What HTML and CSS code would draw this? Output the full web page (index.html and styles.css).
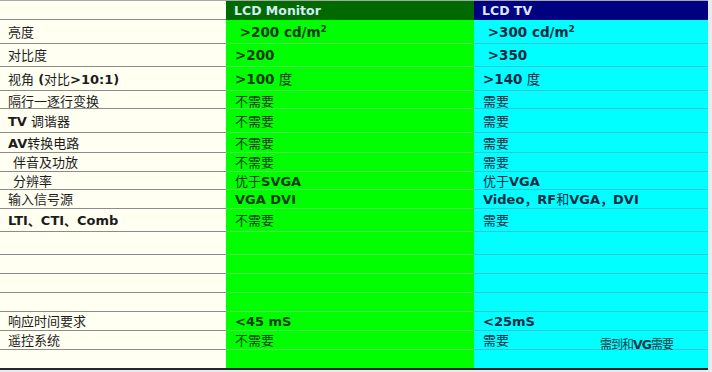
FILE: index.html
```html
<!DOCTYPE html>
<html lang="zh">
<head>
<meta charset="utf-8">
<link rel="stylesheet" href="styles.css">
</head>
<body>
<div class="page">
  <div class="grid">
    <div class="c l"></div>
    <div class="c g hd"><span>LCD Monitor</span></div>
    <div class="c t hd"><span>LCD TV</span></div>

    <div class="c l"><span>亮度</span></div>
    <div class="c g big"><span><b>&nbsp;&gt;200 cd/m<sup>2</sup></b></span></div>
    <div class="c t big"><span><b>&nbsp;&gt;300 cd/m<sup>2</sup></b></span></div>

    <div class="c l"><span>对比度</span></div>
    <div class="c g big"><span><b>&gt;200</b></span></div>
    <div class="c t big"><span><b>&nbsp;&gt;350</b></span></div>

    <div class="c l"><span>视角 <b>(</b>对比<b>&gt;10:1)</b></span></div>
    <div class="c g big"><span><b>&gt;100</b> 度</span></div>
    <div class="c t big"><span><b>&gt;140</b> 度</span></div>

    <div class="c l low"><span>隔行一逐行变换</span></div>
    <div class="c g low"><span>不需要</span></div>
    <div class="c t low"><span>需要</span></div>

    <div class="c l"><span><b>TV</b> 调谐器</span></div>
    <div class="c g"><span>不需要</span></div>
    <div class="c t"><span>需要</span></div>

    <div class="c l"><span><b>AV</b>转换电路</span></div>
    <div class="c g"><span>不需要</span></div>
    <div class="c t"><span>需要</span></div>

    <div class="c l ind"><span>伴音及功放</span></div>
    <div class="c g"><span>不需要</span></div>
    <div class="c t"><span>需要</span></div>

    <div class="c l ind"><span>分辨率</span></div>
    <div class="c g"><span>优于<b>SVGA</b></span></div>
    <div class="c t"><span>优于<b>VGA</b></span></div>

    <div class="c l"><span>输入信号源</span></div>
    <div class="c g"><span><b>VGA DVI</b></span></div>
    <div class="c t"><span><b>Video，RF</b>和<b>VGA，DVI</b></span></div>

    <div class="c l"><span><b>LTI、CTI、Comb</b></span></div>
    <div class="c g"><span>不需要</span></div>
    <div class="c t"><span>需要</span></div>

    <div class="c l"></div><div class="c g"></div><div class="c t"></div>
    <div class="c l"></div><div class="c g"></div><div class="c t"></div>
    <div class="c l"></div><div class="c g"></div><div class="c t"></div>
    <div class="c l"></div><div class="c g"></div><div class="c t"></div>

    <div class="c l"><span>响应时间要求</span></div>
    <div class="c g"><span><b>&lt;45 mS</b></span></div>
    <div class="c t"><span><b>&lt;25mS</b></span></div>

    <div class="c l"><span>遥控系统</span></div>
    <div class="c g"><span>不需要</span></div>
    <div class="c t"><span>需要</span></div>

    <div class="c l last"></div><div class="c g last"></div><div class="c t last"></div>
  </div>
  <div class="ghost">需到和<b>VG</b>需要</div>
</div>
</body>
</html>
```

FILE: styles.css
```css
html, body {
  margin: 0;
  padding: 0;
}
body {
  background: #ffffff;
  width: 712px;
  height: 372px;
  overflow: hidden;
}
.page {
  position: relative;
  width: 712px;
  height: 372px;
  background: #e9e9f0;
}
.grid {
  display: grid;
  grid-template-columns: 226px 248px 234px;
  grid-template-rows: 19px 24px 23px 24px 18px 24px 20px 19px 18px 19px 23px 23px 19px 19px 19px 19px 19px 18px;
  border-top: 1px solid #a8a8a8;
  border-bottom: 2px solid #262626;
  width: 708px;
  background: #fffff2;
}
.c {
  box-sizing: border-box;
  border-bottom: 1px solid #8c8c8c;
  display: flex;
  align-items: center;
  padding-top: 2px;
  white-space: nowrap;
  font-family: "DejaVu Sans", "Noto Sans CJK SC", sans-serif;
  font-size: 13px;
  line-height: 14px;
}
.c b {
  font-weight: bold;
}
.l {
  background: #fffff2;
  color: #1c1c1c;
  padding-left: 8px;
}
.l.ind {
  padding-left: 13px;
}
.g {
  background: #00ff00;
  color: #0c3a0c;
  border-bottom-color: #4fe04f;
  padding-left: 9px;
}
.t {
  background: #00ffff;
  color: #0a2a44;
  border-bottom-color: #38c4d2;
  padding-left: 9px;
}
.big {
  font-size: 13.5px;
  padding-top: 0;
}
.low {
  padding-top: 4px;
}
.hd {
  font-weight: bold;
  font-size: 12.5px;
  padding-top: 1px;
  color: #d4ecf4;
  padding-left: 8px;
}
.g.hd {
  background: #006a00;
  border-bottom-color: #006a00;
}
.t.hd {
  background: #000080;
  border-bottom-color: #000080;
  color: #dde6ff;
}
.last {
  border-bottom: none;
}
sup {
  font-size: 9px;
  line-height: 0;
  vertical-align: 5px;
}
.ghost {
  position: absolute;
  left: 600px;
  top: 335px;
  font-family: "Noto Sans CJK SC", "DejaVu Sans", sans-serif;
  font-size: 12px;
  letter-spacing: -1px;
  color: #1a3a4a;
}
.ghost b {
  font-family: "DejaVu Sans", sans-serif;
  font-size: 12.5px;
}
```
